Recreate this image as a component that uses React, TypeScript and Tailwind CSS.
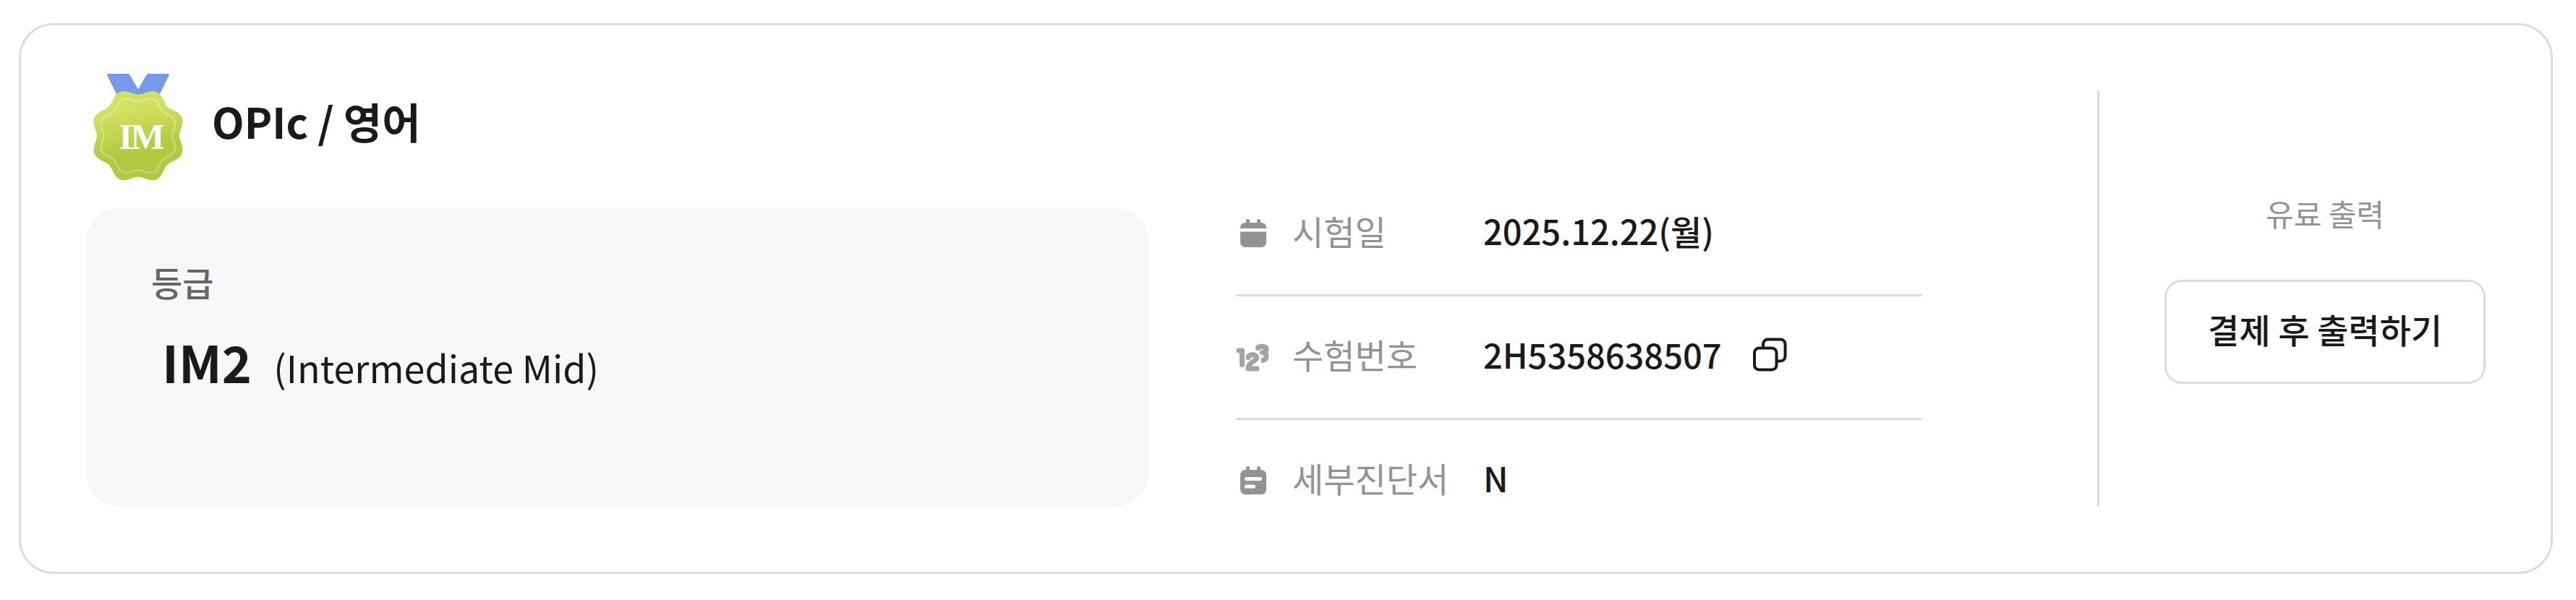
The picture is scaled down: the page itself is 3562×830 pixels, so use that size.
import type { ReactNode } from "react";

const scallop = (base: number, depth: number) => {
  const points: string[] = [];
  for (let i = 0; i < 360; i += 1) {
    const a = (i * Math.PI) / 180;
    const r = base - depth * Math.cos(8 * a);
    points.push(`${(91 + r * Math.cos(a)).toFixed(2)} ${(107.7 + r * Math.sin(a)).toFixed(2)}`);
  }
  return `M${points.join("L")}Z`;
};

function Medal() {
  return (
    <svg viewBox="27 16 128 154" className="-my-8 h-[154px] w-32 shrink-0" role="img" aria-label="IM">
      <defs>
        <linearGradient id="medal" x1="84" y1="70" x2="96" y2="130" gradientUnits="userSpaceOnUse">
          <stop offset="0" stopColor="#d0e15f" />
          <stop offset="1" stopColor="#b4c842" />
        </linearGradient>
      </defs>
      <path
        d="M50 22h27q1.500 0 2.200 1.300L91 43.500l11.800-20.200q.7-1.300 2.200-1.300h27q2.800 0 1.600 2.500L118 56H64L48.400 24.500Q47.200 22 50 22z"
        fill="#7699ea"
      />
      <path d={scallop(61.3, 4.2)} fill="url(#medal)" />
      <path d={scallop(51, 3.5)} fill="none" stroke="#fff" strokeOpacity=".25" strokeWidth="2.800" />
      <text y="126" fill="#fff" fontSize="50" fontWeight="700" fontFamily="Liberation Serif, serif">
        <tspan x="64">I</tspan>
        <tspan x="80.500">M</tspan>
      </text>
    </svg>
  );
}

function CalendarIcon() {
  return (
    <svg viewBox="0 0 48 48" className="size-12" fill="#939393" aria-hidden="true">
      <path d="M6 17v-1.500A7 7 0 0 1 13 9h1V6.500a2.500 2.500 0 0 1 5 0V9h10V6.500a2.500 2.500 0 0 1 5 0V9h1a7 7 0 0 1 7 6.500V17z" />
      <path d="M6 21.500h36V36a7 7 0 0 1-7 7H13a7 7 0 0 1-7-7z" />
    </svg>
  );
}

function NumberIcon() {
  return (
    <svg
      viewBox="0 0 48 48"
      className="size-12"
      fill="none"
      stroke="#a3a3a3"
      strokeWidth="7"
      strokeLinecap="round"
      strokeLinejoin="round"
      aria-hidden="true"
    >
      <path d="M4 15h4.500V34.500" />
      <path d="M17 24.500c0-5 11.500-5 11.500 0 0 6-11.500 6-11.500 14v1.500h12" />
      <path
        d="M30.500 11.500C32 8.500 42 8 42 13c0 3.500-3 4.500-5.500 4.500 3 0 5.500 1.500 5.500 5.500 0 4-3 5.500-7 5.500"
        strokeLinecap="butt"
      />
      <path d="M30.500 11.500V11" />
    </svg>
  );
}

function ReportIcon() {
  return (
    <svg viewBox="0 0 48 48" className="size-12" fill="#939393" aria-hidden="true">
      <path
        fillRule="evenodd"
        d="M14 9V6.500a2.500 2.500 0 0 1 5 0V9h10V6.500a2.500 2.500 0 0 1 5 0V9h1a7 7 0 0 1 7 7v20a7 7 0 0 1-7 7H13a7 7 0 0 1-7-7V16a7 7 0 0 1 7-7zM14.500 19a2.500 2.500 0 0 0 0 5h19a2.500 2.500 0 0 0 0-5zM14.500 29.500a2.500 2.500 0 0 0 0 5h10a2.500 2.500 0 0 0 0-5z"
      />
    </svg>
  );
}

function CopyIcon() {
  return (
    <svg viewBox="0 0 48 48" className="size-12" fill="none" stroke="#1a1a1a" strokeWidth="4" aria-hidden="true">
      <rect x="3" y="15.500" width="30.500" height="30" rx="6.500" />
      <path d="M15 15.500V10a6.500 6.500 0 0 1 6.500-6.500H39a6.500 6.500 0 0 1 6.500 6.500v17a6.500 6.500 0 0 1-6.500 6.500h-5.500" />
    </svg>
  );
}

function Detail({ icon, label, children }: { icon: ReactNode; label: string; children: ReactNode }) {
  return (
    <div className="flex items-center py-12 first:pt-0 last:pb-0">
      <dt className="flex w-[342px] shrink-0 items-center gap-[30px] text-[#939393]">
        {icon}
        <span className="pb-2 text-[47px]/[64px]">{label}</span>
      </dt>
      <dd className="flex items-center gap-[42px] pb-2 text-[47px]/[64px] font-medium">{children}</dd>
    </div>
  );
}

export default function App() {
  return (
    <main className="bg-white py-8 pr-8 pl-[26px] font-['Noto_Sans_CJK_KR',sans-serif] text-[#1a1a1a]">
      <article className="flex rounded-[48px] border-[3px] border-[#dcdcdc] p-[90px]">
        <div className="flex-1 pr-[243px]">
          <header className="mb-[66px] flex h-24 items-center gap-[38px] pl-2">
            <Medal />
            <h2 className="pb-3 text-[58px]/[86px] font-bold">OPIc / 영어</h2>
          </header>
          <div className="grid grid-cols-[1470fr_948fr] gap-[120px]">
            <section className="rounded-[48px] bg-[#f6f7f9] px-[90px] pt-[67px]">
              <h3 className="text-[47px]/[72px] font-medium text-[#666]">등급</h3>
              <p className="flex items-baseline gap-[30px] pt-5 pl-[15px]">
                <strong className="text-[70px]/[108px] font-bold">IM2</strong>
                <span className="text-[52px]/[81px]">(Intermediate Mid)</span>
              </p>
            </section>
            <dl className="divide-y-[3px] divide-[#dcdcdc]">
              <Detail icon={<CalendarIcon />} label="시험일">
                2025.12.22(월)
              </Detail>
              <Detail icon={<NumberIcon />} label="수험번호">
                2H5358638507
                <button type="button" aria-label="수험번호 복사">
                  <CopyIcon />
                </button>
              </Detail>
              <Detail icon={<ReportIcon />} label="세부진단서">
                N
              </Detail>
            </dl>
          </div>
        </div>
        <aside className="flex flex-col items-center border-l-[3px] border-[#dcdcdc] pt-[138px] pl-[90px]">
          <p className="text-[42px]/[63px] text-[#939393]">유료 출력</p>
          <button
            type="button"
            className="mt-[61px] w-[444px] rounded-3xl border-[3px] border-[#dcdcdc] pt-[29px] pb-[37px] text-[47px]/[72px] font-medium"
          >
            결제 후 출력하기
          </button>
        </aside>
      </article>
    </main>
  );
}
